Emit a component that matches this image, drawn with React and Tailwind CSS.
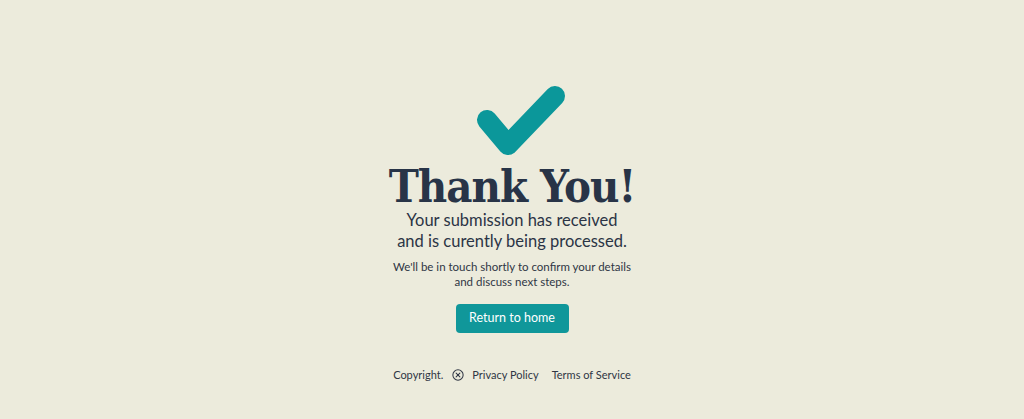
export default function App() {
  return (
    <div className="min-h-screen w-full bg-[#ecebdc] flex flex-col items-center text-[#2b3445]" style={{ fontFamily: 'Lato, "Noto Sans", sans-serif' }}>
      <svg width="100" height="80" viewBox="0 0 100 80" className="mt-[80px] ml-[18px]">
        <path d="M16 40 L37 65 L84 16" fill="none" stroke="#0b979a" strokeWidth="20" strokeLinecap="round" strokeLinejoin="round" />
      </svg>
      <h1 className="mt-[7px] text-[45px] leading-[40px] font-bold tracking-[-1px] text-[#283447] [font-stretch:condensed]" style={{ fontFamily: '"DejaVu Serif Condensed", "DejaVu Serif", serif' }}>
        Thank You!
      </h1>
      <p className="mt-[3px] text-[16.5px] leading-[21px] text-center">
        Your submission has received
        <br />
        and is curently being processed.
      </p>
      <p className="mt-[7px] text-[11.5px] leading-[15px] text-center text-[#2f3644]">
        We'll be in touch shortly to confirm your details
        <br />
        and discuss next steps.
      </p>
      <button className="mt-[15px] w-[113px] h-[29px] rounded-[4px] bg-[#10979a] text-white text-[12.5px]">
        Return to home
      </button>
      <div className="mt-[34px] flex items-center text-[11px] text-[#2f3644]">
        <span>Copyright.</span>
        <svg width="12" height="12" viewBox="0 0 14 14" className="ml-[9px]">
          <circle cx="7" cy="7" r="6" fill="none" stroke="#2f3644" strokeWidth="1.2" />
          <path d="M4.8 4.8 L9.2 9.2 M9.2 4.8 L4.8 9.2" stroke="#2f3644" strokeWidth="1.2" strokeLinecap="round" />
        </svg>
        <span className="ml-[8px]">Privacy Policy</span>
        <span className="ml-[13px]">Terms of Service</span>
      </div>
    </div>
  );
}
